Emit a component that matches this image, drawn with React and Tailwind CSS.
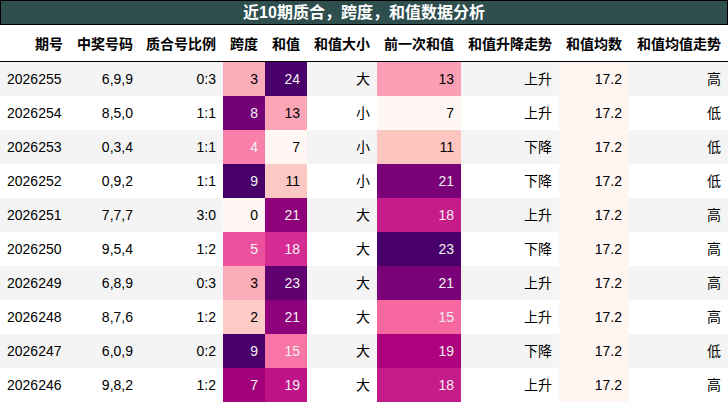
import React from "react";

const stops = [
  [0, [0xff, 0xf7, 0xf3]],
  [0.125, [0xfd, 0xe0, 0xdd]],
  [0.25, [0xfc, 0xc5, 0xc0]],
  [0.375, [0xfa, 0x9f, 0xb5]],
  [0.5, [0xf7, 0x68, 0xa1]],
  [0.625, [0xdd, 0x34, 0x97]],
  [0.75, [0xae, 0x01, 0x7e]],
  [0.875, [0x7a, 0x01, 0x77]],
  [1, [0x49, 0x00, 0x6a]],
];

function rdpu(t) {
  for (let i = 0; i < stops.length - 1; i++) {
    const [a, ca] = stops[i];
    const [b, cb] = stops[i + 1];
    if (t <= b) {
      const f = (t - a) / (b - a);
      return ca.map((v, k) => Math.round(v + (cb[k] - v) * f));
    }
  }
  return stops[stops.length - 1][1];
}

function lum([r, g, b]) {
  const l = (c) => {
    c = c / 255;
    return c <= 0.03928 ? c / 12.92 : Math.pow((c + 0.055) / 1.055, 2.4);
  };
  return 0.2126 * l(r) + 0.7152 * l(g) + 0.0722 * l(b);
}

function cellStyle(v, min, max) {
  const t = max === min ? 0 : (v - min) / (max - min);
  const c = rdpu(t);
  return {
    backgroundColor: `rgb(${c[0]},${c[1]},${c[2]})`,
    color: lum(c) < 0.408 ? "#f1f1f1" : "#000000",
  };
}

const rows = [
  ["2026255", "6,9,9", "0:3", 3, 24, "大", 13, "上升", "17.2", "高"],
  ["2026254", "8,5,0", "1:1", 8, 13, "小", 7, "上升", "17.2", "低"],
  ["2026253", "0,3,4", "1:1", 4, 7, "小", 11, "下降", "17.2", "低"],
  ["2026252", "0,9,2", "1:1", 9, 11, "小", 21, "下降", "17.2", "低"],
  ["2026251", "7,7,7", "3:0", 0, 21, "大", 18, "上升", "17.2", "高"],
  ["2026250", "9,5,4", "1:2", 5, 18, "大", 23, "下降", "17.2", "高"],
  ["2026249", "6,8,9", "0:3", 3, 23, "大", 21, "上升", "17.2", "高"],
  ["2026248", "8,7,6", "1:2", 2, 21, "大", 15, "上升", "17.2", "高"],
  ["2026247", "6,0,9", "0:2", 9, 15, "大", 19, "下降", "17.2", "低"],
  ["2026246", "9,8,2", "1:2", 7, 19, "大", 18, "上升", "17.2", "高"],
];

const headers = ["期号", "中奖号码", "质合号比例", "跨度", "和值", "和值大小", "前一次和值", "和值升降走势", "和值均数", "和值均值走势"];

const gridCols = "grid grid-cols-[70px_70px_83px_42px_42px_70px_84px_98px_70px_99px]";

const heatCols = { 3: [0, 9], 4: [7, 24], 6: [7, 23] };

export default function App() {
  return (
    <div
      className="w-[728px] h-[403px] bg-white text-black overflow-hidden"
      style={{ fontFamily: '"Liberation Sans", "Noto Sans CJK SC", sans-serif' }}
    >
      <div className="h-[25px] border border-black bg-[#2f4f4f] text-white font-bold text-[16px] leading-[23px] text-center">
        近10期质合，跨度，和值数据分析
      </div>
      <div className={`${gridCols} h-[37px] border-b border-black`}>
        {headers.map((h) => (
          <div key={h} className="flex items-center justify-end pr-[7px] pt-[3px] font-bold text-[14px]">
            {h}
          </div>
        ))}
      </div>
      {rows.map((r, i) => (
        <div key={r[0]} className={`${gridCols} h-[34px] ${i % 2 === 0 ? "bg-[#f4f4f4]" : "bg-white"}`}>
          {r.map((v, j) => {
            let style;
            if (heatCols[j]) style = cellStyle(v, heatCols[j][0], heatCols[j][1]);
            if (j === 8) style = { backgroundColor: "#fff5f1", color: "#000" };
            return (
              <div
                key={j}
                style={style}
                className={`flex items-center text-[14px] ${j === 0 ? "justify-start pl-[7px]" : "justify-end pr-[7px]"}`}
              >
                {v}
              </div>
            );
          })}
        </div>
      ))}
    </div>
  );
}
